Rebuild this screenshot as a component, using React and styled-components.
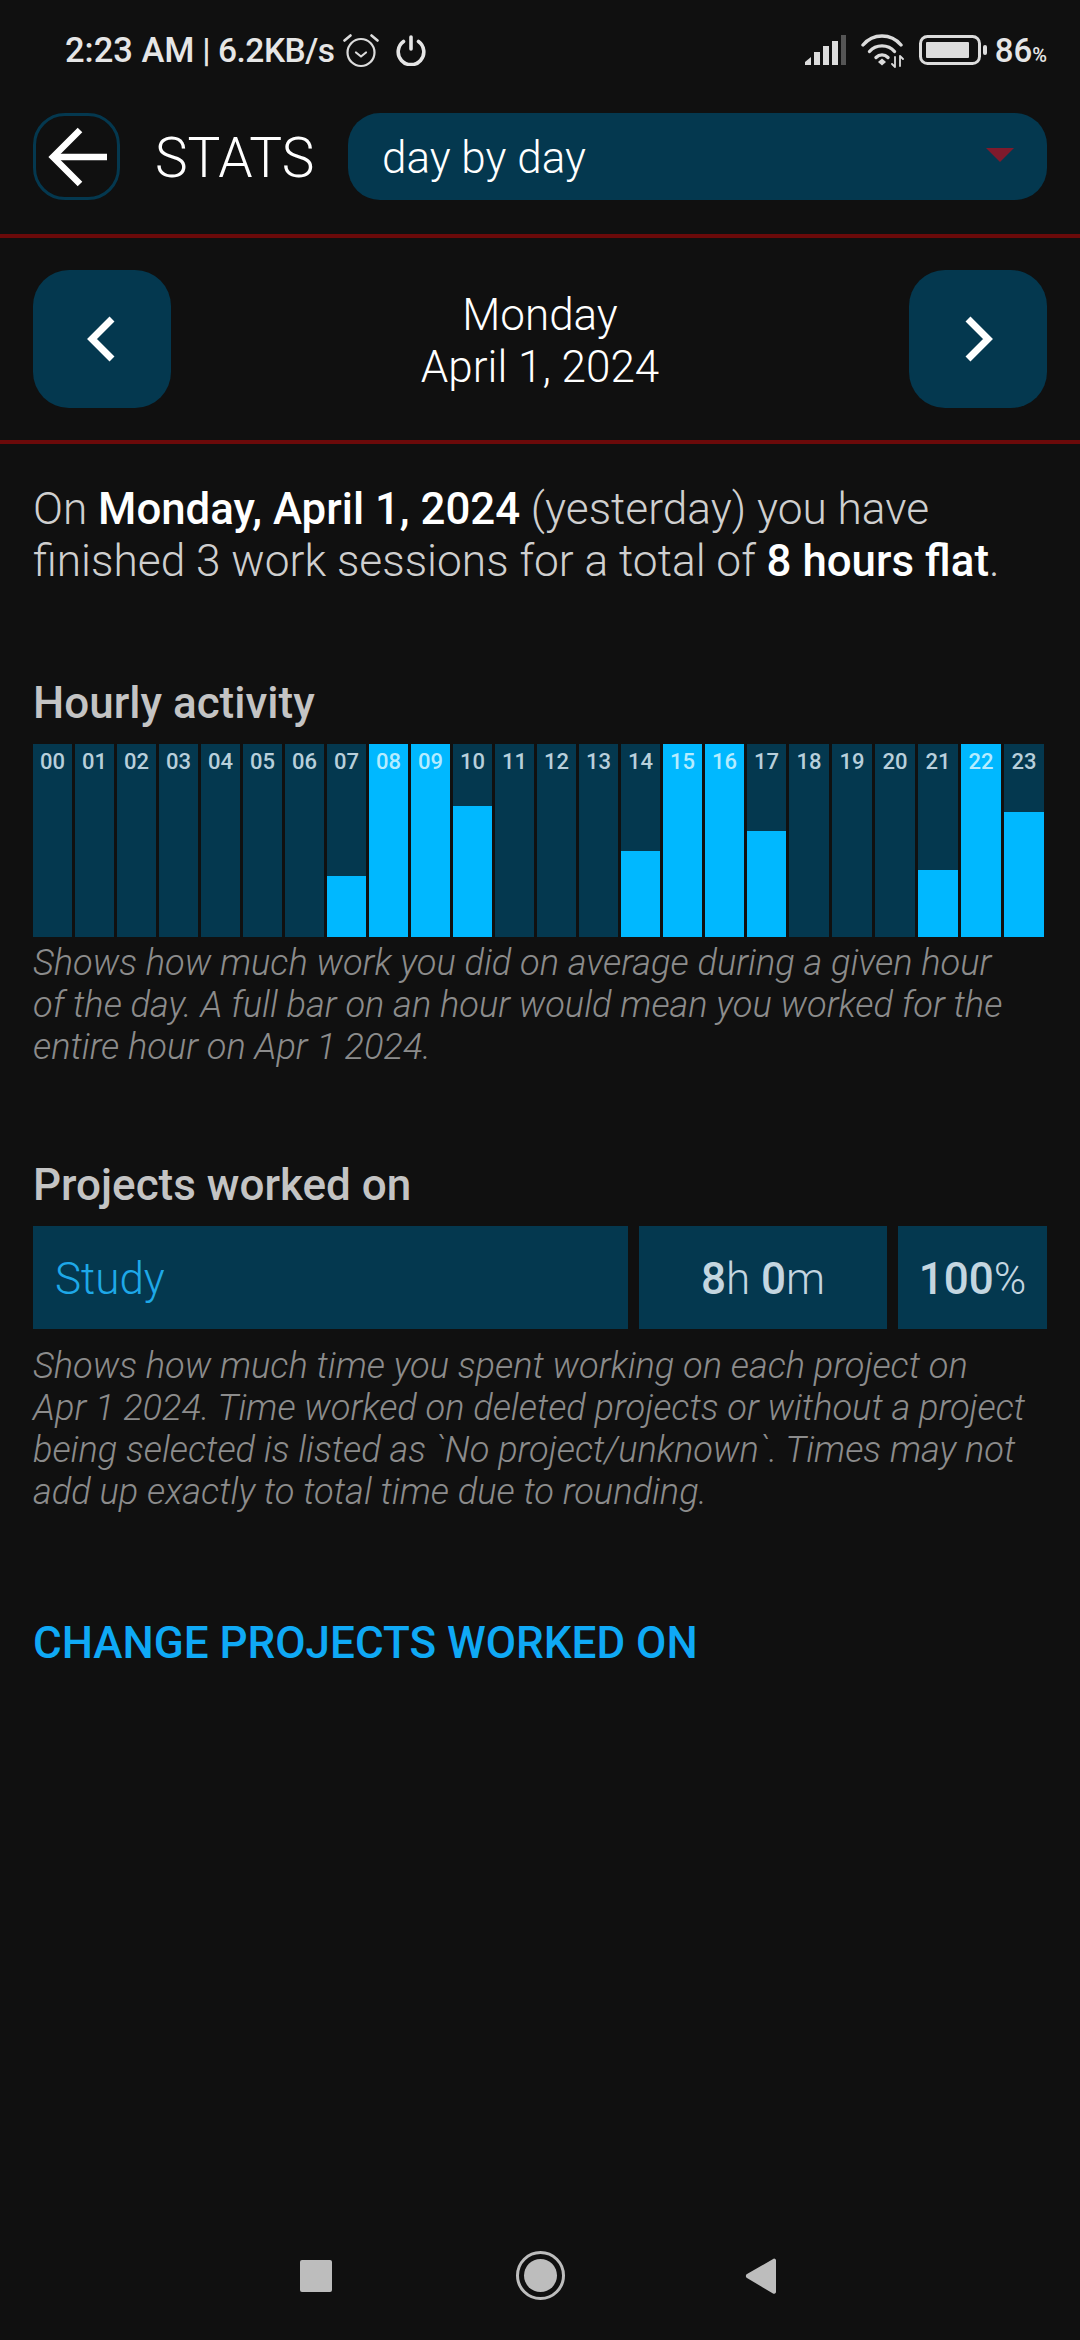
import React from 'react';
import styled, { createGlobalStyle } from 'styled-components';

const GlobalStyle = createGlobalStyle`
    html, body {
        margin: 0;
        padding: 0;
        background: #101010;
    }
    * {
        box-sizing: border-box;
    }
`

const Page = styled.div`
    width: 1080px;
    height: 2340px;
    display: flex;
    flex-direction: column;
    background: #101010;
    font-family: Roboto, "Liberation Sans", sans-serif;
    color: #fff;
`

const StatusBar = styled.div`
    height: 100px;
    padding: 0 33px 0 65px;
    display: flex;
    align-items: center;
    color: #e6e6e6;
    font-size: 34.5px;
    font-weight: 500;
`

const StatusLeft = styled.div`
    display: flex;
    align-items: center;
`

const Speed = styled.span`
    font-size: 33.5px;
    letter-spacing: -0.5px;
`

const StatusRight = styled.div`
    margin-left: auto;
    display: flex;
    align-items: center;
`

const IconSlot = styled.span`
    display: flex;
    margin-left: ${(p) => p.$gap}px;
`

const Percent = styled.span`
    font-size: 33px;
    font-weight: 500;
    margin-left: 8px;
    small {
        font-size: 20px;
    }
`

const Header = styled.header`
    padding: 13px 33px 34px;
    display: flex;
    align-items: center;
    border-bottom: 4px solid #6b0a0a;
`

const BackButton = styled.div`
    width: 87px;
    height: 87px;
    flex: none;
    border: 3px solid #04384f;
    border-radius: 32px;
    display: flex;
    align-items: center;
    justify-content: center;
`

const Title = styled.div`
    margin-left: 35px;
    width: 193px;
    padding-top: 2px;
    font-size: 55px;
    font-weight: 300;
`

const Select = styled.div`
    flex: 1;
    height: 87px;
    border-radius: 32px;
    background: #04384f;
    padding: 3px 33px 0 34px;
    display: flex;
    align-items: center;
    justify-content: space-between;
    font-size: 44px;
    font-weight: 300;
`

const Caret = styled.div`
    width: 0;
    height: 0;
    border-left: 14px solid transparent;
    border-right: 14px solid transparent;
    border-top: 14px solid #7f1a2c;
    margin-top: -6px;
`

const DateBar = styled.div`
    padding: 32px 33px;
    display: flex;
    align-items: center;
    justify-content: space-between;
    border-bottom: 4px solid #6b0a0a;
`

const NavButton = styled.div`
    width: 138px;
    height: 138px;
    border-radius: 36px;
    background: #04384f;
    display: flex;
    align-items: center;
    justify-content: center;
`

const DateText = styled.div`
    padding-top: 3px;
    text-align: center;
    font-size: 44px;
    font-weight: 300;
    line-height: 52px;
`

const Content = styled.main`
    padding: 39px 33px 0;
    display: flex;
    flex-direction: column;
`

const Summary = styled.p`
    margin: 0;
    font-size: 44.25px;
    font-weight: 300;
    line-height: 52px;
    color: #cfcfcf;
    b {
        font-size: 43.8px;
        font-weight: 500;
        color: #fff;
    }
`

const SectionTitle = styled.h2`
    margin: ${(p) => p.$top}px 0 16px;
    font-size: 44px;
    font-weight: 500;
    line-height: 50px;
    color: #c4c4c4;
`

const Chart = styled.div`
    height: 193px;
    display: grid;
    grid-template-columns: repeat(18, 39px) repeat(6, 40px);
    column-gap: 3px;
`

const HourColumn = styled.div`
    position: relative;
    background: #04384f;
    display: flex;
    align-items: flex-end;
`

const HourFill = styled.div`
    width: 100%;
    background: #00b8ff;
`

const HourLabel = styled.span`
    position: absolute;
    top: 5px;
    left: 0;
    right: 0;
    text-align: center;
    font-size: 22px;
    font-weight: 500;
    line-height: 26px;
    color: ${(p) => (p.$full ? '#b5ecff' : '#b8cfdb')};
`

const Caption = styled.p`
    margin: ${(p) => p.$top}px 0 0;
    font-size: 36.2px;
    font-style: italic;
    font-weight: 300;
    line-height: 42px;
    color: #8c8c8c;
`

const ProjectRow = styled.div`
    height: 103px;
    display: grid;
    grid-template-columns: 595px 248px 149px;
    column-gap: 11px;
`

const ProjectCell = styled.div`
    background: #04384f;
    display: flex;
    align-items: center;
    justify-content: ${(p) => (p.$left ? 'flex-start' : 'center')};
    padding-left: ${(p) => (p.$left ? '22px' : '0')};
    padding-top: 3px;
    font-size: 44px;
    font-weight: 300;
    color: ${(p) => (p.$left ? '#1ea8e8' : '#c4d6e0')};
    b {
        font-weight: 500;
    }
`

const ChangeLink = styled.a`
    margin-top: 105px;
    font-size: 44px;
    font-weight: 500;
    line-height: 50px;
    color: #0fa9f5;
`

const BottomNav = styled.nav`
    margin-top: auto;
    height: 89px;
    margin-bottom: 20px;
    padding-left: 300px;
    display: flex;
    align-items: center;
`

const NavSquare = styled.div`
    width: 32px;
    height: 32px;
    border-radius: 2px;
    background: #bdbdbd;
`

const NavCircle = styled.div`
    width: 49px;
    height: 49px;
    margin: 0 180px 0 184px;
    border-radius: 50%;
    border: 3px solid #bdbdbd;
    padding: 5px;
    &::after {
        content: '';
        display: block;
        width: 100%;
        height: 100%;
        border-radius: 50%;
        background: #bdbdbd;
    }
`

const hours = [
    0, 0, 0, 0, 0, 0, 0, 0.316, 1, 1, 0.68, 0,
    0, 0, 0.446, 1, 1, 0.55, 0, 0, 0, 0.347, 1, 0.648,
];

function AlarmIcon() {
    return (
        <svg width="36" height="36" viewBox="0 0 36 36" fill="none" stroke="#dcdcdc" strokeWidth="2.2" strokeLinecap="round" strokeLinejoin="round">
            <circle cx="18" cy="20.5" r="13.5" />
            <path d="M13 20.5l5 4 5-4" />
            <path d="M1.5 8.5L7.5 3.5M34.5 8.5L28.5 3.5" strokeWidth="2.6" />
        </svg>
    );
}

function PowerIcon() {
    return (
        <svg width="32" height="32" viewBox="0 0 32 32" fill="none" stroke="#e6e6e6" strokeWidth="3.6" strokeLinecap="round">
            <path d="M16 3v12" />
            <path d="M8.5 7.5a12.8 12.8 0 1 0 15 0" />
        </svg>
    );
}

function SignalIcon() {
    return (
        <svg width="41" height="30" viewBox="0 0 41 30">
            <path d="M0 30v-3l6-5v8z" fill="#dcdcdc" />
            <rect x="9" y="17" width="6" height="13" fill="#dcdcdc" />
            <rect x="18" y="11" width="6" height="19" fill="#dcdcdc" />
            <rect x="27" y="6" width="6" height="24" fill="#dcdcdc" />
            <rect x="36" y="0" width="5" height="30" fill="#555" />
        </svg>
    );
}

function WifiIcon() {
    return (
        <svg width="44" height="35" viewBox="0 0 44 35" fill="none" stroke="#dcdcdc" strokeWidth="3.4" strokeLinecap="round">
            <path d="M2 12C12 0 30 0 40 12" />
            <path d="M8.5 18.5C15 11 27 11 33.5 18.5" />
            <path d="M15 24.5C18.5 21 23.5 21 27 24.5" />
            <path d="M21 25.5l4 3.5-4 3.5-4-3.5z" fill="#dcdcdc" stroke="none" />
            <path d="M34 24v10M34 34l-3-3M39 33V23M39 23l3 3" strokeWidth="1.8" />
        </svg>
    );
}

function BatteryIcon() {
    return (
        <svg width="68" height="30" viewBox="0 0 68 30">
            <rect x="1.5" y="1.5" width="59" height="27" rx="7" fill="none" stroke="#dcdcdc" strokeWidth="3" />
            <rect x="7" y="7" width="43" height="16" rx="1" fill="#dcdcdc" />
            <rect x="64" y="10" width="4" height="10" rx="2" fill="#dcdcdc" />
        </svg>
    );
}

function BackArrow() {
    return (
        <svg width="60" height="60" viewBox="0 0 60 60" fill="none" stroke="#fff" strokeWidth="6.5">
            <path d="M60 30H6" />
            <path d="M33 3L6 30l27 27" />
        </svg>
    );
}

function Chevron({ flip }) {
    return (
        <svg width="30" height="46" viewBox="0 0 30 46" fill="none" stroke="#fff" strokeWidth="7">
            <path d={flip ? 'M5 3l20 20L5 43' : 'M25 3L5 23l20 20'} />
        </svg>
    );
}

function BackTriangle() {
    return (
        <svg width="32" height="38" viewBox="0 0 32 38">
            <path d="M29 1.5a2 2 0 0 1 2 1.5v32a2 2 0 0 1-3 1.5L2 21a2.3 2.3 0 0 1 0-4z" fill="#bdbdbd" />
        </svg>
    );
}

function App() {
    return (
        <Page>
            <GlobalStyle />
            <StatusBar>
                <StatusLeft>
                    <span>2:23 AM</span>
                    <Speed>&nbsp;|&nbsp;6.2KB/s</Speed>
                    <IconSlot $gap={8}><AlarmIcon /></IconSlot>
                    <IconSlot $gap={16}><PowerIcon /></IconSlot>
                </StatusLeft>
                <StatusRight>
                    <SignalIcon />
                    <IconSlot $gap={15}><WifiIcon /></IconSlot>
                    <IconSlot $gap={14}><BatteryIcon /></IconSlot>
                    <Percent>86<small>%</small></Percent>
                </StatusRight>
            </StatusBar>
            <Header>
                <BackButton><BackArrow /></BackButton>
                <Title>STATS</Title>
                <Select>
                    day by day
                    <Caret />
                </Select>
            </Header>
            <DateBar>
                <NavButton><Chevron /></NavButton>
                <DateText>Monday<br />April 1, 2024</DateText>
                <NavButton><Chevron flip /></NavButton>
            </DateBar>
            <Content>
                <Summary>
                    On <b>Monday, April 1, 2024</b> (yesterday) you have<br />
                    finished 3 work sessions for a total of <b>8 hours flat</b>.
                </Summary>
                <SectionTitle $top={91}>Hourly activity</SectionTitle>
                <Chart>
                    {hours.map((value, i) => (
                        <HourColumn key={i}>
                            <HourFill style={{ height: `${value * 100}%` }} />
                            <HourLabel $full={value === 1}>{String(i).padStart(2, '0')}</HourLabel>
                        </HourColumn>
                    ))}
                </Chart>
                <Caption $top={5}>
                    Shows how much work you did on average during a given hour<br />
                    of the day. A full bar on an hour would mean you worked for the<br />
                    entire hour on Apr 1 2024.
                </Caption>
                <SectionTitle $top={92}>Projects worked on</SectionTitle>
                <ProjectRow>
                    <ProjectCell $left>Study</ProjectCell>
                    <ProjectCell><b>8</b>h&nbsp;<b>0</b>m</ProjectCell>
                    <ProjectCell><b>100</b>%</ProjectCell>
                </ProjectRow>
                <Caption $top={16}>
                    Shows how much time you spent working on each project on<br />
                    Apr 1 2024. Time worked on deleted projects or without a project<br />
                    being selected is listed as `No project/unknown`. Times may not<br />
                    add up exactly to total time due to rounding.
                </Caption>
                <ChangeLink>CHANGE PROJECTS WORKED ON</ChangeLink>
            </Content>
            <BottomNav>
                <NavSquare />
                <NavCircle />
                <BackTriangle />
            </BottomNav>
        </Page>
    );
}

export default App;
